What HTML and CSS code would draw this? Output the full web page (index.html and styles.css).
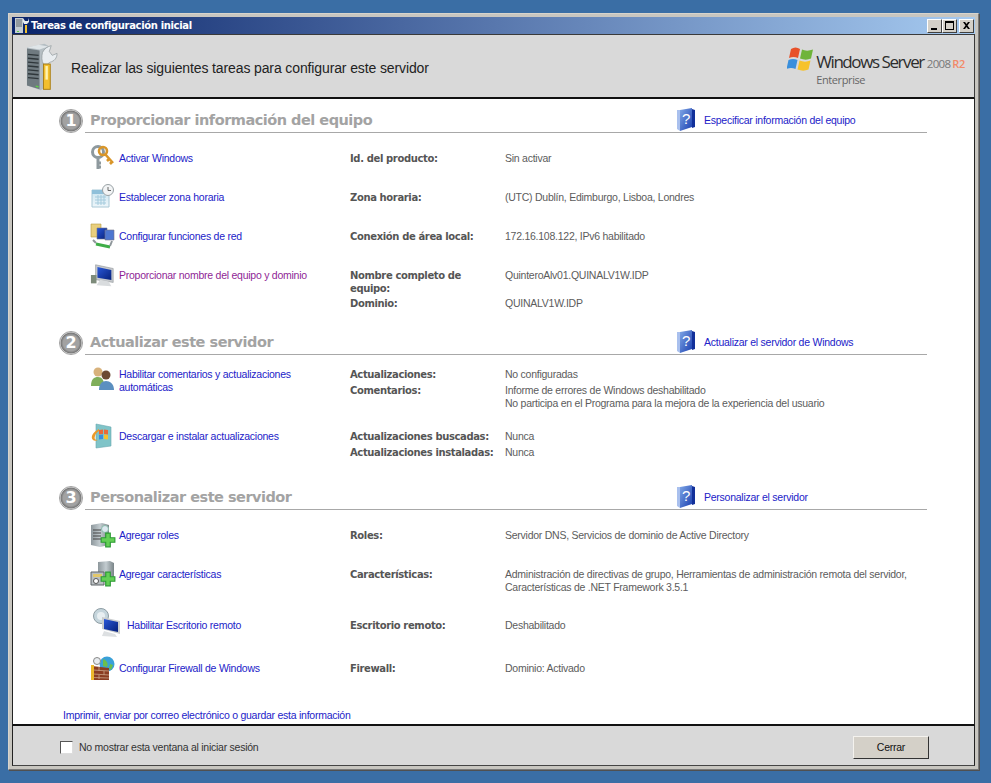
FILE: index.html
```html
<!DOCTYPE html>
<html lang="es">
<head>
<meta charset="utf-8">
<title>Tareas de configuración inicial</title>
<link rel="stylesheet" href="styles.css">
</head>
<body>
<svg class="defs" width="0" height="0" aria-hidden="true">
  <defs>
    <linearGradient id="gBook" x1="0" y1="0" x2="1" y2="1"><stop offset="0" stop-color="#7fa6e6"/><stop offset="1" stop-color="#1a3fb0"/></linearGradient>
    <linearGradient id="gServer" x1="0" y1="0" x2="1" y2="0"><stop offset="0" stop-color="#8d979c"/><stop offset=".5" stop-color="#c3ccd0"/><stop offset="1" stop-color="#7a8488"/></linearGradient>
    <linearGradient id="gScreen" x1="0" y1="0" x2="1" y2="1"><stop offset="0" stop-color="#2a58d8"/><stop offset="1" stop-color="#06207a"/></linearGradient>
    <linearGradient id="gCal" x1="0" y1="0" x2="0" y2="1"><stop offset="0" stop-color="#c9e4f0"/><stop offset="1" stop-color="#eef6fa"/></linearGradient>
    <symbol id="plus" viewBox="0 0 14 14"><path d="M5 1h4v4h4v4H9v4H5V9H1V5h4z" fill="#63cf55" stroke="#2c9a34"/></symbol>
    <symbol id="help" viewBox="0 0 18 23">
      <path d="M3 2 15 0v19L3 23z" fill="url(#gBook)"/><path d="M3 2v21l-3-2V2z" fill="#a9c0ee"/><path d="M15 1l3 1v17l-3 1z" fill="#12309a"/>
      <text x="9" y="16" class="help-q">?</text>
    </symbol>
    <symbol id="monitor" viewBox="0 0 28 28">
      <path d="M6 3 25 7v15L6 19z" fill="#c6c9cc" stroke="#8b9094" stroke-width=".6"/><path d="M8 5.500 23 8.500v11L8 17z" fill="url(#gScreen)"/>
      <path d="M11 19l9 2 3 5-16-1z" fill="#d9dcde"/><path d="M1 14h6v9H1z" fill="#7d8b7a"/>
    </symbol>
  </defs>
</svg>

<main class="window">
  <div class="titlebar">
    <svg class="title-icon" viewBox="0 0 16 17" aria-hidden="true"><path d="M1 1h8v15H1z" fill="#c5ccd2"/><path d="M2 3h6M2 5h6M2 7h6M2 9h6" stroke="#5e676c"/><path d="M3 14h2v1H3z" fill="#5fd04a"/><path d="M11 8h2v8h-2z" fill="#f2c230"/><path d="M9 1l2 3h3l1-3v4l-2 2h-3L9 5z" fill="#e8ecef"/></svg>
    <span class="title-text">Tareas de configuración inicial</span>
    <div class="win-buttons">
      <span class="win-btn"><svg viewBox="0 0 13 11"><path d="M3 8h6v2H3z"/></svg></span>
      <span class="win-btn"><svg viewBox="0 0 13 11"><path fill-rule="evenodd" d="M2 1h9v9H2zM3 3v6h7V3z"/></svg></span>
      <span class="win-btn win-btn-close"><svg viewBox="0 0 13 11"><path d="M3 2h2l1.500 2L8 2h2L7.500 5.500 10 9H8L6.500 7 5 9H3l2.500-3.500z"/></svg></span>
    </div>
  </div>

  <header class="banner">
    <svg class="banner-icon" viewBox="0 0 34 50" aria-hidden="true">
      <path d="M1 5 19 1l4 2v41l-8 5-14-5z" fill="#b5bec3"/>
      <path d="M1 5 13 2l10 2-9 3z" fill="#dfe5e8"/>
      <path d="M1 6l13 2v40L1 44z" fill="#6f7a80"/>
      <path d="M2 12l11 1M2 16l11 1M2 20l11 1M2 24l11 1M2 28l11 1M2 32l11 1M2 36l11 1" stroke="#2f373b" stroke-width="1.400"/>
      <path d="M10 44l3 .5v1.500l-3-.5z" fill="#5fd04a"/>
      <path d="M17 10c2-4 5-6 9-7l-2 6 3 4 5-2c0 5-3 8-7 9l-3 2h-4c-2-3-2-8-1-12z" fill="#e9edf0" stroke="#8d9599" stroke-width=".7"/>
      <rect x="18" y="22" width="7" height="26" fill="#f2bf2d" stroke="#a97f16"/>
      <path d="M20 24h2.500v14H20z" fill="#fff3b0"/>
    </svg>
    <h1 class="banner-title">Realizar las siguientes tareas para configurar este servidor</h1>
    <div class="brand">
      <svg class="brand-flag" viewBox="0 0 28 26" aria-hidden="true">
        <path d="M4 2c3-2 6-2 9 0l-2 9c-3-1.500-6-1.500-9 0z" fill="#e8512a"/>
        <path d="M15 2.500c3 1.500 7 1.500 11 0l-2 9c-3.500 1.500-7 1.500-11 0z" fill="#6fb43a"/>
        <path d="M1.500 13c3-1.500 6-1.500 9 0l-2 9c-3-1.500-6-1.500-9 0z" fill="#3a8fdc"/>
        <path d="M12.500 13.500c3.500 1.500 7.500 1.500 11 0l-2 9c-3.500 1.500-7 1.500-11 0z" fill="#f6c22c"/>
      </svg>
      <div class="brand-text">
        <div class="brand-name">Windows Server<span class="brand-year">2008</span><span class="brand-r2">R2</span></div>
        <div class="brand-edition">Enterprise</div>
      </div>
    </div>
  </header>

  <div class="content">
    <section class="section section-one">
      <div class="section-head">
        <span class="badge">1</span>
        <div class="head-line">
          <h2 class="head-title">Proporcionar información del equipo</h2>
          <a class="help-link" href="#"><svg class="help-icon" aria-hidden="true"><use href="#help"/></svg>Especificar información del equipo</a>
        </div>
      </div>
      <div class="rows rows-wide">
        <div class="row row-39">
          <svg class="task-icon" viewBox="0 0 26 26" aria-hidden="true"><circle cx="8" cy="7" r="5.500" fill="none" stroke="#8e999e" stroke-width="3"/><path d="M8 12v12M8 18h3M8 22h3" stroke="#8e999e" stroke-width="3"/><circle cx="13" cy="6" r="4" fill="none" stroke="#d9962a" stroke-width="2.600"/><path d="M15 9l8 9M19 14l-2 2M22 17l-2 2" stroke="#d9962a" stroke-width="2.600"/></svg>
          <a class="task" href="#">Activar Windows</a>
          <dl class="details"><dt>Id. del producto:</dt><dd>Sin activar</dd></dl>
        </div>
        <div class="row row-39">
          <svg class="task-icon" viewBox="0 0 26 26" aria-hidden="true"><path d="M2 6h17v17H2z" fill="url(#gCal)" stroke="#a9c8d6"/><path d="M2 6h17v4H2z" fill="#8fc0da"/><path d="M5 13h11M5 16h11M5 19h11M8 11v10M11 11v10M14 11v10" stroke="#a5cbdd"/><circle cx="18" cy="6" r="5.500" fill="#f2f4f5" stroke="#9aa2a6"/><path d="M18 3v3.500h3" fill="none" stroke="#666"/></svg>
          <a class="task" href="#">Establecer zona horaria</a>
          <dl class="details"><dt>Zona horaria:</dt><dd>(UTC) Dublín, Edimburgo, Lisboa, Londres</dd></dl>
        </div>
        <div class="row row-39">
          <svg class="task-icon" viewBox="0 0 26 26" aria-hidden="true"><path d="M1 1h10v13H1z" fill="#e9cf7d" stroke="#b79b45" stroke-width=".6"/><path d="M7 5h10v11H7z" fill="url(#gScreen)" stroke="#778" stroke-width=".6"/><path d="M15 7h9v10h-9z" fill="#4d76d0" stroke="#778" stroke-width=".6"/><path d="M6 21l14 3" stroke="#3fae48" stroke-width="3"/><path d="M3 17l3 3M22 18l-2 5" stroke="#8f979b" stroke-width="2"/></svg>
          <a class="task" href="#">Configurar funciones de red</a>
          <dl class="details"><dt>Conexión de área local:</dt><dd>172.16.108.122, IPv6 habilitado</dd></dl>
        </div>
        <div class="row">
          <svg class="task-icon" aria-hidden="true"><use href="#monitor"/></svg>
          <a class="task task-visited" href="#">Proporcionar nombre del equipo y dominio</a>
          <dl class="details details-tight"><dt>Nombre completo de equipo:</dt><dd>QuinteroAlv01.QUINALV1W.IDP</dd><dt>Dominio:</dt><dd>QUINALV1W.IDP</dd></dl>
        </div>
      </div>
    </section>

    <section class="section section-two">
      <div class="section-head">
        <span class="badge">2</span>
        <div class="head-line">
          <h2 class="head-title">Actualizar este servidor</h2>
          <a class="help-link" href="#"><svg class="help-icon" aria-hidden="true"><use href="#help"/></svg>Actualizar el servidor de Windows</a>
        </div>
      </div>
      <div class="rows rows-narrow">
        <div class="row row-62">
          <svg class="task-icon task-icon-low" viewBox="0 0 26 26" aria-hidden="true"><circle cx="8" cy="6" r="4.500" fill="#d8b27c"/><path d="M1 20c0-7 3-9 7-9s6 3 6 9z" fill="#7fae5a"/><circle cx="16" cy="9" r="4.500" fill="#6d4a34"/><path d="M9 24c0-6 3-9 7-9s8 3 8 9z" fill="#5b8fc0"/></svg>
          <a class="task" href="#">Habilitar comentarios y actualizaciones automáticas</a>
          <dl class="details"><dt>Actualizaciones:</dt><dd>No configuradas</dd><dt>Comentarios:</dt><dd>Informe de errores de Windows deshabilitado<br>No participa en el Programa para la mejora de la experiencia del usuario</dd></dl>
        </div>
        <div class="row">
          <svg class="task-icon" viewBox="0 0 26 26" aria-hidden="true"><path d="M6 1l15 3v19L6 25z" fill="#7fc4c8" stroke="#6aa8b0" stroke-width=".6"/><path d="M9 7l4-.5v4.500l-4 .5zM14 6.500l4 .5v4.500l-4-.5z" fill="#e8693a"/><path d="M9 12l4-.5V16l-4 .5z" fill="#3a8fdc"/><path d="M14 11.500l4 .5v4.500l-4-.5z" fill="#f6c22c"/><path d="M9 6C3 9 0 14 3 17c1 1 3 1 5 0-3 0-4-1-3-4 .5-2 2-4 4-5z" fill="#eb9a2a"/></svg>
          <a class="task" href="#">Descargar e instalar actualizaciones</a>
          <dl class="details"><dt>Actualizaciones buscadas:</dt><dd>Nunca</dd><dt>Actualizaciones instaladas:</dt><dd>Nunca</dd></dl>
        </div>
      </div>
    </section>

    <section class="section">
      <div class="section-head">
        <span class="badge">3</span>
        <div class="head-line">
          <h2 class="head-title">Personalizar este servidor</h2>
          <a class="help-link" href="#"><svg class="help-icon" aria-hidden="true"><use href="#help"/></svg>Personalizar el servidor</a>
        </div>
      </div>
      <div class="rows rows-wide">
        <div class="row row-39">
          <svg class="task-icon" viewBox="0 0 26 26" aria-hidden="true"><path d="M1 3l11-2 7 2v20l-9 2-9-2z" fill="url(#gServer)"/><path d="M3 8h8M3 11h8M3 14h8M3 17h8" stroke="#444" stroke-width="1.200"/><circle cx="15" cy="7" r="3.500" fill="#dce8ef" stroke="#8ba"/><use href="#plus" x="10" y="10" width="16" height="16"/></svg>
          <a class="task" href="#">Agregar roles</a>
          <dl class="details"><dt>Roles:</dt><dd>Servidor DNS, Servicios de dominio de Active Directory</dd></dl>
        </div>
        <div class="row row-51">
          <svg class="task-icon" viewBox="0 0 26 26" aria-hidden="true"><path d="M8 1l12-1 4 2v18H8z" fill="url(#gServer)"/><path d="M1 11h13v13H1z" fill="#b9bfc2" stroke="#5e6569"/><path d="M3 13h9v3H3z" fill="#e2c76a"/><circle cx="6" cy="20" r="2.500" fill="#fff" stroke="#555"/><use href="#plus" x="10" y="10" width="16" height="16"/></svg>
          <a class="task" href="#">Agregar características</a>
          <dl class="details"><dt>Características:</dt><dd>Administración de directivas de grupo, Herramientas de administración remota del servidor, Características de .NET Framework 3.5.1</dd></dl>
        </div>
        <div class="row row-43">
          <svg class="task-icon task-icon-large" viewBox="0 0 28 30" aria-hidden="true"><circle cx="8" cy="8" r="7.500" fill="#c5d5dc" stroke="#8e9da4"/><circle cx="8" cy="8" r="4" fill="#e8eff2"/><path d="M9 9l18 4v13L9 21z" fill="#c9ccce"/><path d="M11 11l14 3v10l-14-3z" fill="url(#gScreen)"/><path d="M11 23l11 3 2 3-15-1z" fill="#dde0e2"/></svg>
          <a class="task task-indent" href="#">Habilitar Escritorio remoto</a>
          <dl class="details"><dt>Escritorio remoto:</dt><dd>Deshabilitado</dd></dl>
        </div>
        <div class="row row-53">
          <svg class="task-icon" viewBox="0 0 26 26" aria-hidden="true"><circle cx="17" cy="9" r="7.500" fill="#3aa0d8"/><path d="M13 4c3 1 6 4 4 8l-4-1zM20 9l3 1-2 5-2-2z" fill="#6cbe4c"/><circle cx="7" cy="6" r="3.500" fill="#e8ecef" stroke="#888"/><path d="M2 11l17 2v12L4 25z" fill="#8a3d22"/><path d="M3 15l16 1M3 19l16 1M3 22.500l16 .5M9 12v4M14 16v4M9 20v4" stroke="#caa489" stroke-width=".8"/><path d="M1 10h3v15H1z" fill="#edb92c"/></svg>
          <a class="task" href="#">Configurar Firewall de Windows</a>
          <dl class="details"><dt>Firewall:</dt><dd>Dominio: Activado</dd></dl>
        </div>
      </div>
    </section>
    <a class="print-link" href="#">Imprimir, enviar por correo electrónico o guardar esta información</a>
  </div>

  <footer class="footer">
    <label class="check"><span class="check-box"></span>No mostrar esta ventana al iniciar sesión</label>
    <button class="close-btn" type="button">Cerrar</button>
  </footer>
</main>
</body>
</html>
```

FILE: styles.css
```css
* { box-sizing: border-box; }
html, body { margin: 0; height: 100%; }
body {
  background: #3a6ea5;
  font-family: "Liberation Sans", Arial, sans-serif;
  font-size: 10.5px;
  letter-spacing: -.25px;
  overflow: hidden;
  padding: 13px 0 0 8px;
}
.defs { display: block; height: 0; }
.help-q { font: 15px "Liberation Sans", sans-serif; fill: #fff; text-anchor: middle; }

.window {
  width: 971px;
  height: 757px;
  background: #c8c6c0;
  border: 1px solid #7a7a7a;
  border-top-color: #d8d4cc;
  border-left-color: #d8d4cc;
  box-shadow: 1px 1px 0 #505050;
  padding: 3px;
  display: flex;
  flex-direction: column;
}

.titlebar {
  height: 17px;
  flex: none;
  display: flex;
  align-items: center;
  background: linear-gradient(90deg, #0a246a, #a6caf0);
  padding: 0 1px 0 2px;
}
.title-icon { width: 16px; height: 17px; margin-right: 1px; flex: none; }
.title-text { color: #fff; font-weight: bold; font-size: 10px; font-family: "DejaVu Sans", sans-serif; letter-spacing: -.35px; }
.win-buttons { margin-left: auto; display: flex; }
.win-btn {
  width: 15px; height: 14px;
  background: #d4d0c8;
  border: 1px solid;
  border-color: #fff #404040 #404040 #fff;
  display: flex;
}
.win-btn-close { margin-left: 2px; }
.win-btn svg { width: 13px; height: 11px; fill: #000; }

.banner {
  height: 65px;
  flex: none;
  background: #d9d9d9;
  border: 1px solid #3a3a3a;
  border-bottom: 2px solid #111;
  display: flex;
  align-items: center;
  padding-left: 13px;
  padding-right: 9px;
}
.banner-icon { width: 33px; height: 50px; flex: none; margin-top: 2px; }
.banner-title { font-weight: normal; font-size: 14px; letter-spacing: -.12px; color: #222; margin: 4px 0 0 12px; }
.brand { margin-left: auto; display: flex; align-items: flex-start; }
.brand-flag { width: 28px; height: 26px; }
.brand-text { margin: 6px 0 0 1px; }
.brand-name { font: 400 17px/18px "Open Sans", sans-serif; letter-spacing: -1.430px; color: #2d2d2d; white-space: nowrap; }
.brand-year { font-size: 11.500px; letter-spacing: -.7px; color: #777; margin-left: 3px; }
.brand-r2 { font-size: 11px; font-weight: 600; letter-spacing: -.3px; color: #f28a68; margin-left: 2px; }
.brand-edition { font: 11px/13px "Open Sans", sans-serif; letter-spacing: -.4px; color: #666; }

.content {
  flex: 1;
  min-height: 0;
  background: #fff;
  border-left: 1px solid #222;
  border-right: 1px solid #222;
  border-bottom: 2px solid #111;
  padding: 1px 47px 0 46px;
  display: flex;
  flex-direction: column;
}
.section-one { height: 222px; }
.section-two { height: 155px; }

.section-head { display: flex; height: 33px; }
.badge {
  width: 24px; height: 24px;
  margin-top: 9px;
  margin-right: 2px;
  flex: none;
  border-radius: 50%;
  background: radial-gradient(circle at 50% 50%, #a2a2a2 0 50%, #787878 64%, #e2e2e2 70%, #c4c4c4 84%, #9a9a9a 100%);
  border: 1px solid #a0a0a0;
  color: #fff;
  font: bold 16px/22px "DejaVu Sans", sans-serif;
  letter-spacing: 0;
  text-align: center;
}
.head-line {
  flex: 1;
  display: flex;
  align-items: flex-end;
  border-bottom: 1px solid #a8a8a8;
  padding-left: 5px;
  height: 33px;
}
.head-title {
  margin: 0;
  font: bold 14.500px/23px "DejaVu Sans", sans-serif;
  letter-spacing: -.5px;
  color: #a3a3a3;
  width: 587px;
  flex: none;
}
.help-link {
  display: flex;
  align-items: center;
  height: 27px;
  padding-top: 2px;
  color: #2222c8;
  text-decoration: none;
}
.help-icon { width: 18px; height: 23px; margin-right: 9px; flex: none; }

.rows { padding-left: 26px; }
.rows-wide { padding-top: 12px; }
.rows-narrow { padding-top: 6px; }
.row {
  display: grid;
  grid-template-columns: 34px 231px 155px 1fr;
  align-items: start;
}
.row-39 { height: 39px; }
.row-43 { height: 43px; }
.row-51 { height: 51px; }
.row-53 { height: 53px; }
.row-62 { height: 62px; }
.task-icon { width: 26px; height: 26px; margin-left: 5px; overflow: visible; display: block; }
.task-icon-low { margin-top: 5px; }
.task-icon-large { width: 28px; height: 30px; margin: -4px 0 0 8px; }
.task {
  color: #2222c8;
  text-decoration: none;
  line-height: 13px;
  padding: 7px 10px 0 0;
  display: block;
}
.task-visited { color: #8f1f96; }
.task-indent { padding-left: 8px; }

.details {
  grid-column: 3 / 5;
  margin: 0;
  padding-top: 7px;
  display: grid;
  grid-template-columns: 155px 1fr;
  row-gap: 3px;
  line-height: 13px;
  color: #5c5c5c;
}
.details-tight { row-gap: 2px; }
.details dt {
  font: bold 10px/13px "DejaVu Sans", sans-serif;
  letter-spacing: -.37px;
  color: #555;
  padding-right: 8px;
}
.details dd { margin: 0; }
.print-link {
  color: #2222c8;
  text-decoration: none;
  margin: auto 0 2px 4px;
  line-height: 13px;
}

.footer {
  height: 40px;
  flex: none;
  background: #d9d9d9;
  border-left: 1px solid #222;
  border-right: 1px solid #222;
  border-bottom: 1px solid #444;
  display: flex;
  align-items: center;
  padding: 3px 45px 0 47px;
  color: #333;
}
.check { display: flex; align-items: center; }
.check-box {
  width: 13px; height: 13px;
  background: #fff;
  border: 1px solid;
  border-color: #555 #ddd #ddd #555;
  margin-right: 6px;
}
.close-btn {
  margin-left: auto;
  width: 76px; height: 23px;
  background: #d4d0c8;
  border: 1px solid;
  border-color: #f4f2ee #333 #333 #f4f2ee;
  font: 10.5px "Liberation Sans", sans-serif;
  letter-spacing: -.25px;
  color: #111;
  padding: 0;
}
```
